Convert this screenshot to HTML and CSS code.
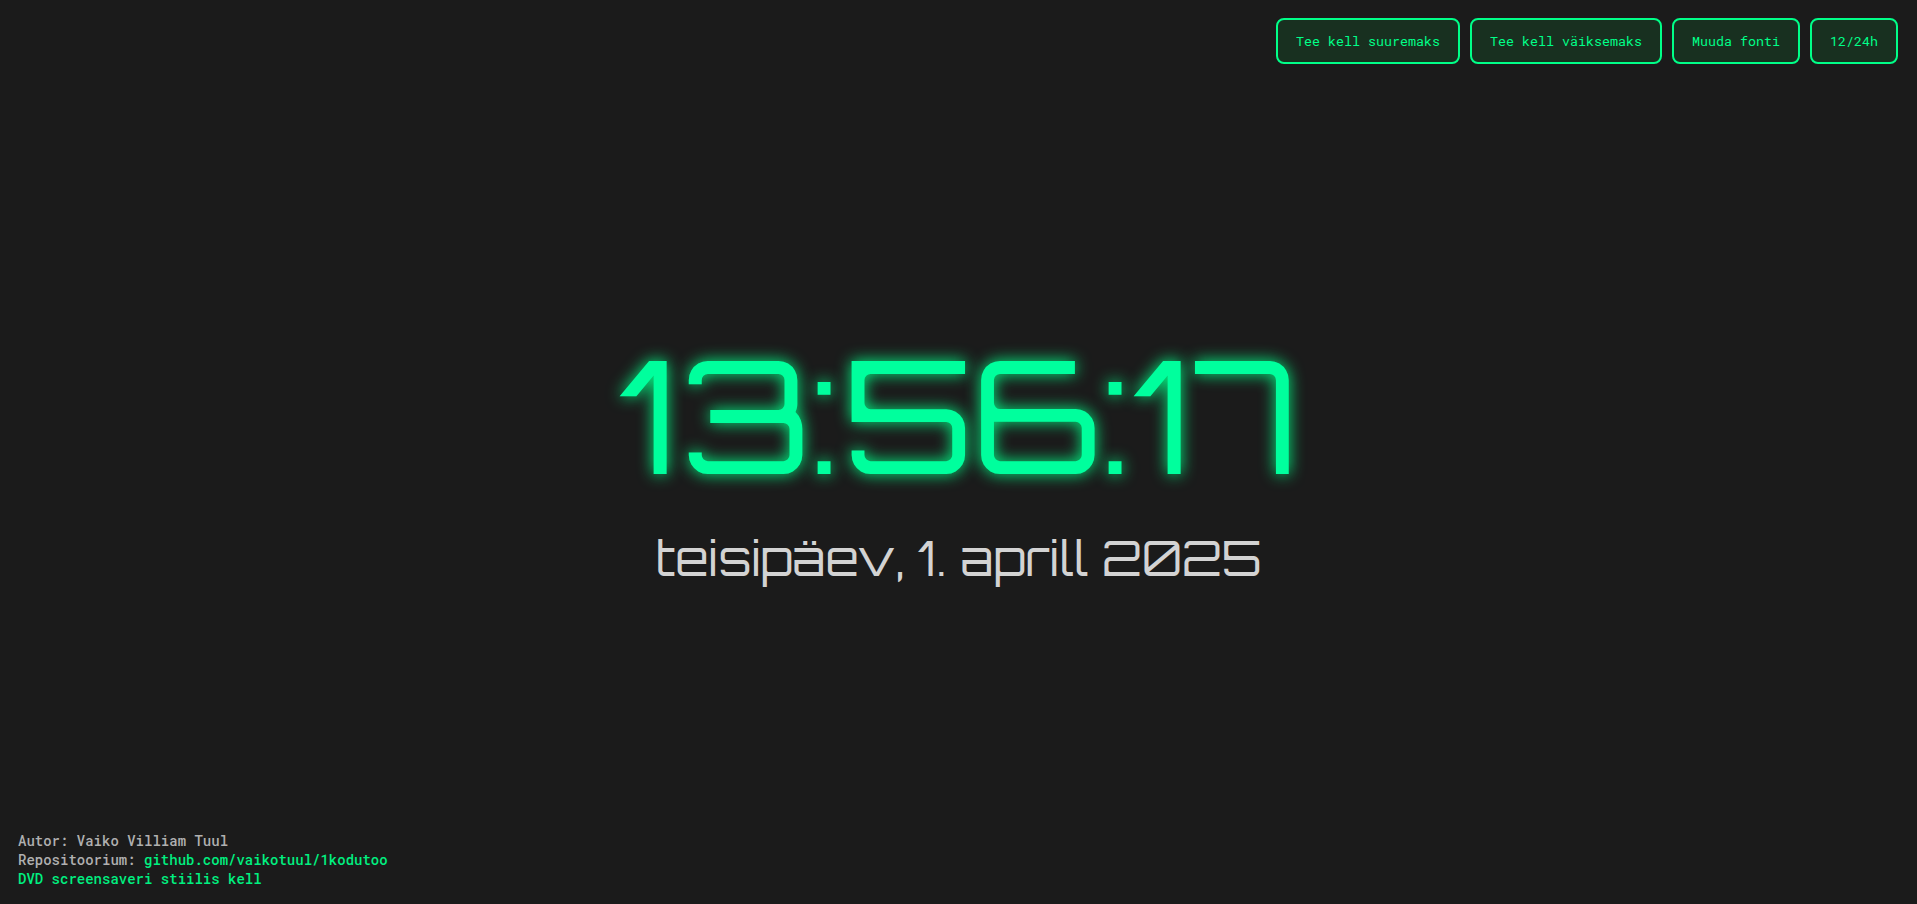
FILE: index.html
```html
<!DOCTYPE html>
<html lang="et">
<head>
<meta charset="utf-8">
<meta name="viewport" content="width=device-width, initial-scale=1">
<title>Kell</title>
<link rel="stylesheet" href="styles.css">
</head>
<body class="page">
  <header class="controls">
    <button class="control" type="button">Tee kell suuremaks</button>
    <button class="control" type="button">Tee kell väiksemaks</button>
    <button class="control" type="button">Muuda fonti</button>
    <button class="control" type="button">12/24h</button>
  </header>
  <main class="clock">
    <time class="clock-time" datetime="13:56:17">13:56:17</time>
    <time class="clock-date" datetime="2025-04-01">teisipäev, 1. aprill 2025</time>
  </main>
  <footer class="credits">
    <div>Autor: Vaiko Villiam Tuul</div>
    <div>Repositoorium: <a class="link" href="https://github.com/vaikotuul/1kodutoo">github.com/vaikotuul/1kodutoo</a></div>
    <div><a class="link" href="#">DVD screensaveri stiilis kell</a></div>
  </footer>
</body>
</html>
```
FILE: styles.css
```css
* {
  box-sizing: border-box;
}

.page {
  margin: 0;
  min-height: 100vh;
  display: grid;
  grid-template-rows: 1fr auto 1fr;
  background: #1b1b1b;
  font-family: "Roboto Mono", "DejaVu Sans Mono", monospace;
  font-weight: 500;
}

.controls {
  display: flex;
  flex-wrap: wrap;
  justify-content: flex-end;
  align-items: flex-start;
  gap: 10px;
  padding: 18px 19px 0 18px;
}

.control {
  padding: 0 18px;
  height: 46px;
  border: 2px solid #00ff88;
  border-radius: 8px;
  background: #183020;
  color: #00ff88;
  font-family: inherit;
  font-weight: 400;
  cursor: pointer;
}

.clock {
  display: flex;
  flex-direction: column;
  align-items: center;
  gap: 16px;
  text-align: center;
}

.clock-time,
.clock-date {
  font-family: Orbitron, "DejaVu Sans", sans-serif;
  font-weight: 400;
}

.clock-time {
  font-size: 156px;
  line-height: 196px;
  color: #00ff9d;
  text-shadow: 0 0 16px #00ff88;
}

.clock-date {
  font-size: 48px;
  line-height: 60px;
  color: #d3d3d3;
}

.credits {
  align-self: end;
  padding: 0 18px 16px;
  font-size: 14px;
  line-height: 19px;
  color: #b0b0b0;
}

.link {
  color: #00f080;
  text-decoration: none;
}
```
